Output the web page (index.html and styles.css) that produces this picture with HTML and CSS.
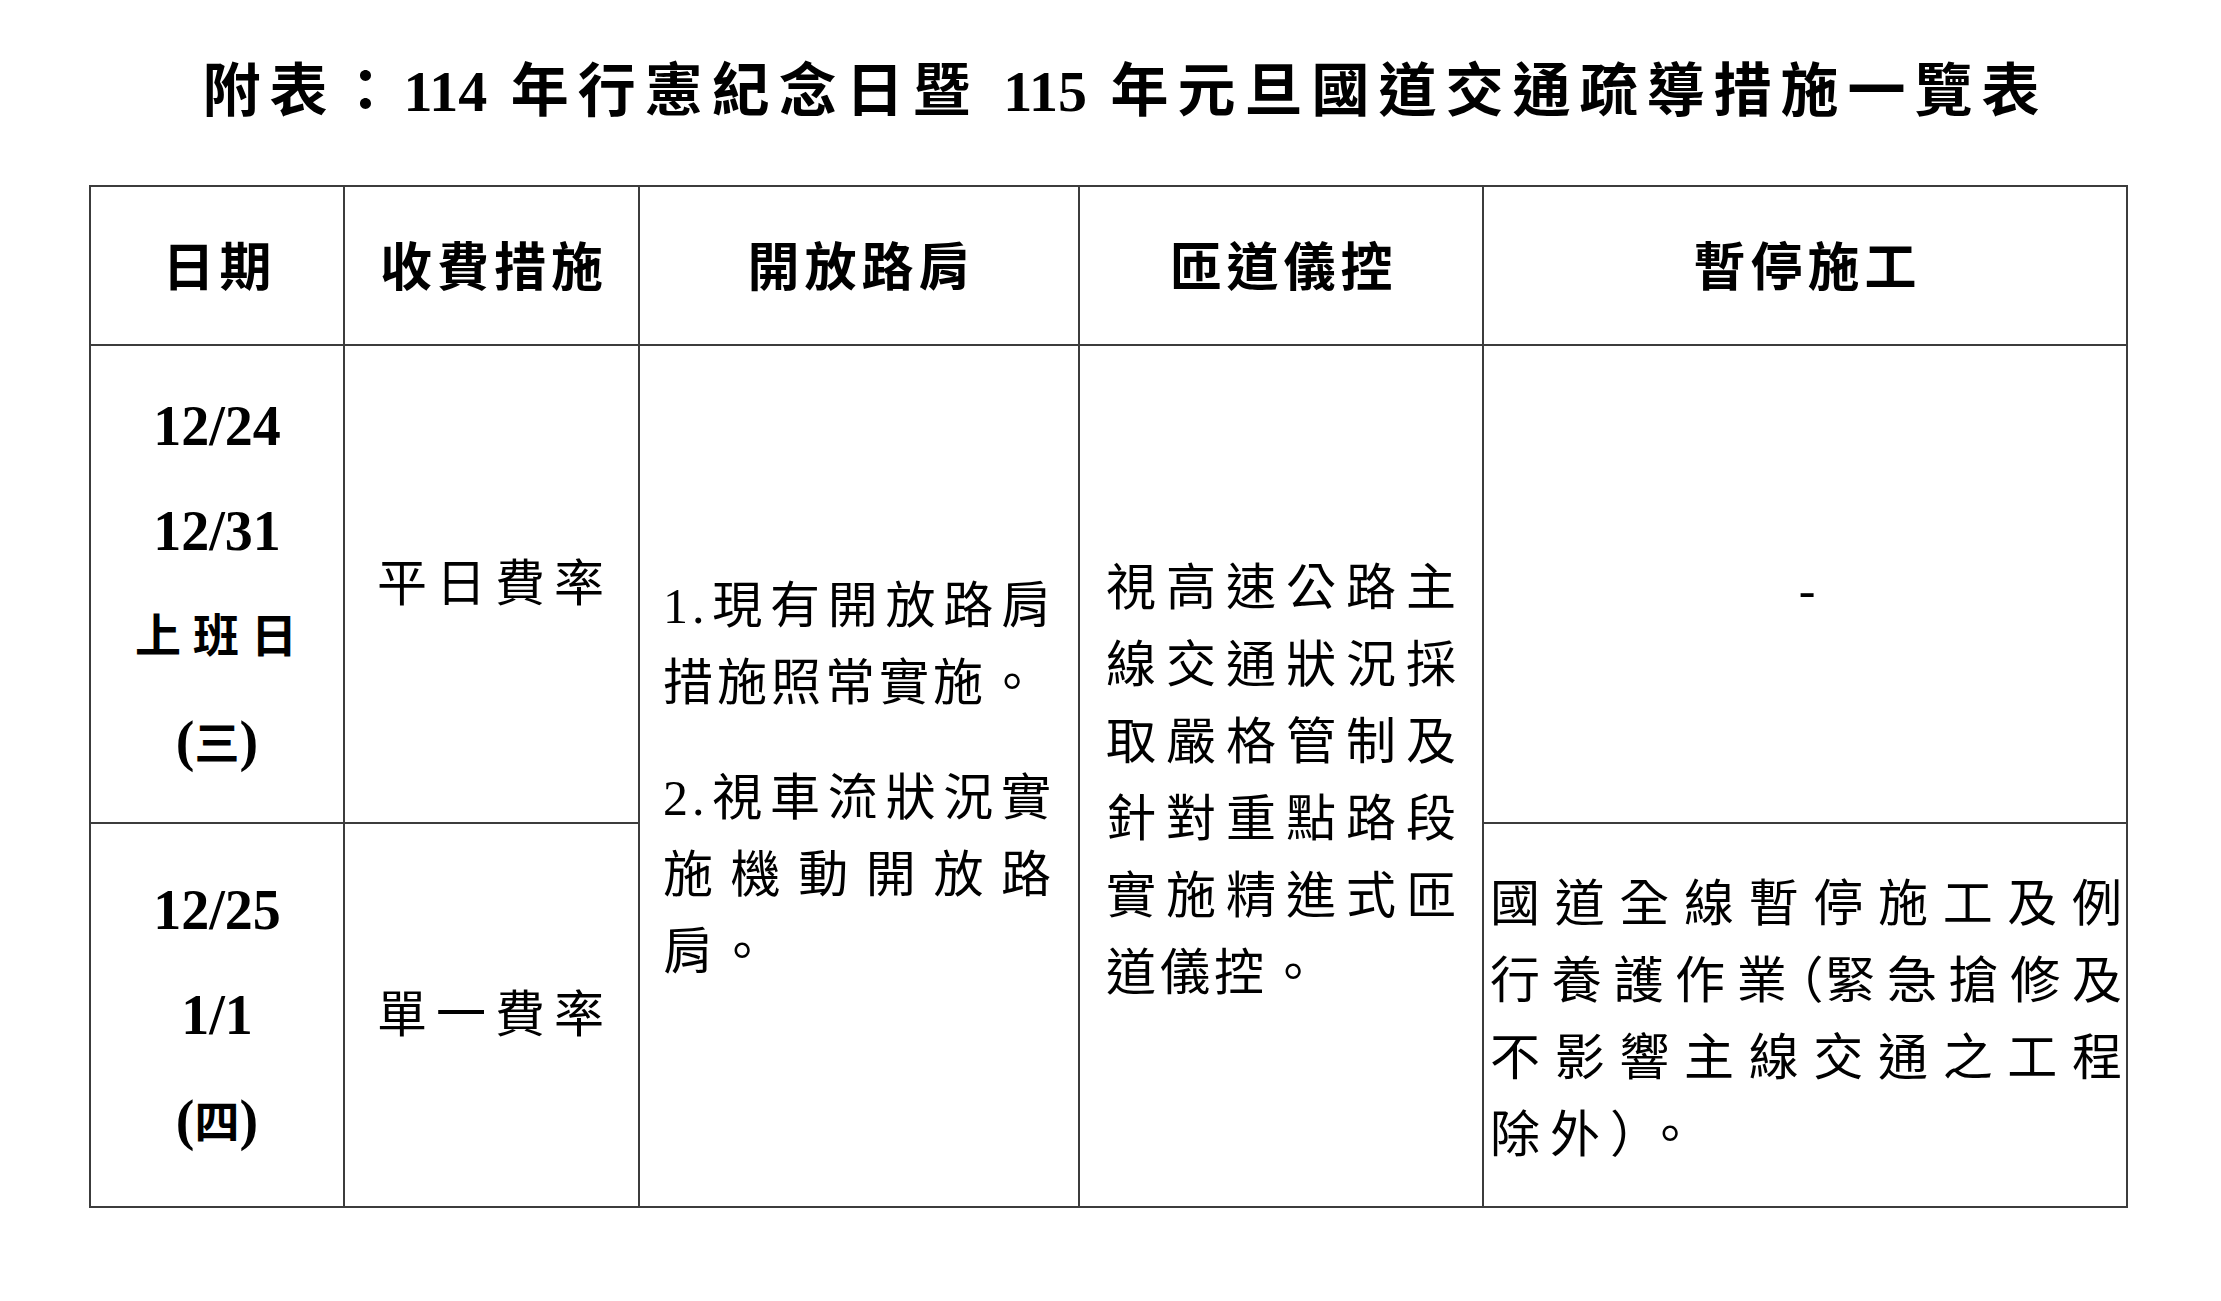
FILE: index.html
```html
<!DOCTYPE html>
<html lang="zh-Hant">
<head>
<meta charset="utf-8">
<title>附表：114 年行憲紀念日暨 115 年元旦國道交通疏導措施一覽表</title>
<link rel="stylesheet" href="styles.css">
</head>
<body>
<div class="page">
  <h1 class="title">附表：<span class="num">114</span> 年行憲紀念日暨 <span class="num">115</span> 年元旦國道交通疏導措施一覽表</h1>
  <table class="plan">
    <colgroup>
      <col class="c-date">
      <col class="c-fee">
      <col class="c-shoulder">
      <col class="c-ramp">
      <col class="c-work">
    </colgroup>
    <thead>
      <tr class="head-row">
        <th>日期</th>
        <th>收費措施</th>
        <th>開放路肩</th>
        <th>匝道儀控</th>
        <th>暫停施工</th>
      </tr>
    </thead>
    <tbody>
      <tr class="row-1">
        <td class="date">
          <div>12/24</div>
          <div>12/31</div>
          <div class="cjk">上班日</div>
          <div>(<span class="cjk-in">三</span>)</div>
        </td>
        <td class="fee">平日費率</td>
        <td class="para shoulder" rowspan="2">
          <div class="box">
            <p>1.現有開放路肩措施照常實施。</p>
            <p>2.視車流狀況實施機動開放路肩。</p>
          </div>
        </td>
        <td class="para ramp" rowspan="2">
          <div class="box">視高速公路主線交通狀況採取嚴格管制及針對重點路段實施精進式匝道儀控。</div>
        </td>
        <td class="dash">-</td>
      </tr>
      <tr class="row-2">
        <td class="date">
          <div>12/25</div>
          <div>1/1</div>
          <div>(<span class="cjk-in">四</span>)</div>
        </td>
        <td class="fee">單一費率</td>
        <td class="para work">
          <div class="box">國道全線暫停施工及例行養護作業<span class="halt">（</span>緊急搶修及不影響主線交通之工程除外）。</div>
        </td>
      </tr>
    </tbody>
  </table>
</div>
</body>
</html>
```
FILE: styles.css
```css
html, body {
  margin: 0;
  padding: 0;
  background: #ffffff;
}

body {
  color: #000000;
  font-family: "Liberation Serif", "Noto Sans CJK TC", serif;
}

.page {
  width: 2221px;
  padding-top: 52px;
}

.title {
  margin: 0;
  padding-left: 30px;
  text-align: center;
  font-family: "Liberation Serif", "Noto Sans CJK TC", serif;
  font-size: 58px;
  font-weight: 700;
  line-height: 80px;
  letter-spacing: 9px;
  white-space: nowrap;
}

.title .num {
  letter-spacing: 0;
}

.plan {
  margin: 53px 0 0 89px;
  width: 2037px;
  table-layout: fixed;
  border-collapse: collapse;
}

.c-date { width: 254px; }
.c-fee { width: 295px; }
.c-shoulder { width: 440px; }
.c-ramp { width: 404px; }
.c-work { width: 644px; }

.plan th,
.plan td {
  border: 2px solid #3c3c3c;
  padding: 0;
  vertical-align: middle;
  text-align: center;
}

.head-row { height: 159px; }
.row-1 { height: 478px; }
.row-2 { height: 384px; }

.plan th {
  font-size: 52px;
  font-weight: 700;
  letter-spacing: 5px;
  line-height: 60px;
  padding-left: 5px;
  padding-top: 6px;
}

.plan td.date {
  font-size: 56px;
  font-weight: 700;
  line-height: 105px;
  padding-top: 4px;
}

.date .cjk {
  font-size: 46px;
  letter-spacing: 12px;
  padding-left: 10px;
}

.date .cjk-in {
  font-size: 45px;
}

.plan td.fee {
  font-size: 50px;
  font-weight: 400;
  letter-spacing: 9px;
  padding-left: 7px;
  line-height: 60px;
}

.plan td.dash {
  font-size: 50px;
  font-weight: 400;
  padding-top: 12px;
  padding-left: 4px;
}

.plan td.para {
  text-align: left;
  font-size: 50px;
  font-weight: 400;
  line-height: 77px;
  letter-spacing: 4px;
}

.para .box {
  text-align: justify;
  text-justify: inter-character;
  line-break: strict;
}

.para p {
  margin: 0;
}

.para p + p {
  margin-top: 38px;
}

.plan td.shoulder {
  padding: 6px 0 0 23px;
}

.shoulder .box {
  width: 392px;
}

.plan td.ramp {
  padding: 10px 0 0 26px;
}

.ramp .box {
  width: 354px;
}

.plan td.work {
  padding: 10px 0 0 6px;
  letter-spacing: 10px;
}

.work .box {
  width: 642px;
}

.work .halt {
  letter-spacing: 0;
  font-feature-settings: "halt" 1;
}
```
